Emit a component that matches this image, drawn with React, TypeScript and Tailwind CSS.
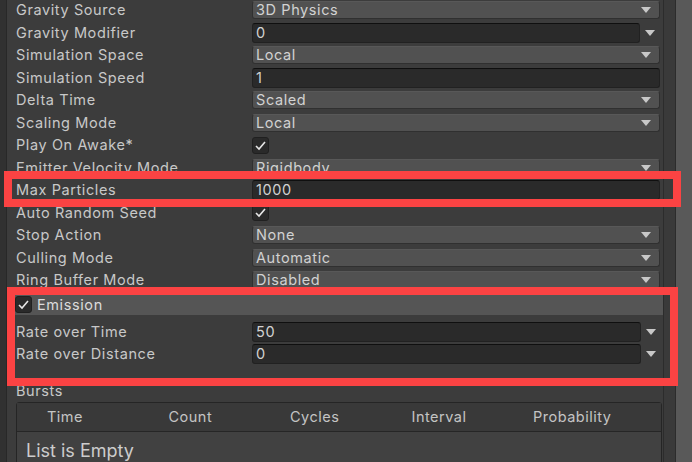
import React from "react";

type Kind = "dropdown" | "field" | "curve" | "check";

interface PropRow {
	label: string;
	kind: Kind;
	value?: string;
}

const mainRows: PropRow[] = [
	{ label: "Gravity Source", kind: "dropdown", value: "3D Physics" },
	{ label: "Gravity Modifier", kind: "curve", value: "0" },
	{ label: "Simulation Space", kind: "dropdown", value: "Local" },
	{ label: "Simulation Speed", kind: "field", value: "1" },
	{ label: "Delta Time", kind: "dropdown", value: "Scaled" },
	{ label: "Scaling Mode", kind: "dropdown", value: "Local" },
	{ label: "Play On Awake*", kind: "check" },
	{ label: "Emitter Velocity Mode", kind: "dropdown", value: "Rigidbody" },
	{ label: "Max Particles", kind: "field", value: "1000" },
	{ label: "Auto Random Seed", kind: "check" },
	{ label: "Stop Action", kind: "dropdown", value: "None" },
	{ label: "Culling Mode", kind: "dropdown", value: "Automatic" },
	{ label: "Ring Buffer Mode", kind: "dropdown", value: "Disabled" },
];

const emissionRows: PropRow[] = [
	{ label: "Rate over Time", kind: "curve", value: "50" },
	{ label: "Rate over Distance", kind: "curve", value: "0" },
];

const burstColumns = ["Time", "Count", "Cycles", "Interval", "Probability"];

function Arrow() {
	return (
		<svg width="10" height="6" viewBox="0 0 10 6" className="shrink-0">
			<polygon points="0,0 10,0 5,6" fill="#c8c8c8" />
		</svg>
	);
}

function CheckBox() {
	return (
		<div className="w-[17px] h-[17px] rounded-[3px] bg-[#2a2a2a] border border-[#202020] flex items-center justify-center">
			<svg width="13" height="13" viewBox="0 0 13 13">
				<polyline
					points="2,7 5,10 11,3"
					fill="none"
					stroke="#e6e6e6"
					strokeWidth={1.6}
				/>
			</svg>
		</div>
	);
}

function Value({ row }: { row: PropRow }) {
	if (row.kind === "check") {
		return <CheckBox />;
	}
	if (row.kind === "dropdown") {
		return (
			<div className="flex-1 h-[18px] rounded-[3px] bg-[#515151] border border-[#303030] border-t-[#585858] flex items-center pl-[3px] pr-[8px]">
				<span className="flex-1 text-[#d2d2d2]">{row.value}</span>
				<Arrow />
			</div>
		);
	}
	const input = (
		<div className="flex-1 h-[20px] rounded-[3px] bg-[#2a2a2a] border border-[#212121] border-t-[#0f0f0f] flex items-center pl-[3px]">
			<span className="text-[#d2d2d2]">{row.value}</span>
		</div>
	);
	if (row.kind === "field") return input;
	return (
		<div className="flex-1 flex items-center">
			{input}
			<div className="w-[20px] flex justify-center">
				<Arrow />
			</div>
		</div>
	);
}

function Row({ row }: { row: PropRow }) {
	return (
		<div className="h-[22.5px] flex items-center pb-[2px] pl-[9px] pr-[3px]">
			<div className="w-[236px] text-[#c8c8c8] whitespace-nowrap overflow-hidden">
				{row.label}
			</div>
			<Value row={row} />
		</div>
	);
}

export default function App() {
	return (
		<div className="relative w-[692px] h-[462px] overflow-hidden flex bg-[#3c3c3c] text-[14.5px] tracking-[0.6px] font-['Inter','Noto_Sans',sans-serif]">
			<div className="w-[7px] bg-[#313131] border-r border-[#282828]" />

			<div className="w-[656px] flex flex-col">
				{mainRows.map((row) => (
					<Row key={row.label} row={row} />
				))}

				<div className="mt-[1.5px] ml-[4px] mr-[-2px] border-r border-[#303030]">
					<div className="h-[21px] bg-[#555555] rounded-t-[3px] flex items-center gap-[5px] pl-[4px]">
						<CheckBox />
						<span className="text-[#dcdcdc]">Emission</span>
					</div>
					<div className="pt-[6.5px] pb-[14px] -ml-[4px]">
						{emissionRows.map((row) => (
							<Row key={row.label} row={row} />
						))}
					</div>
				</div>

				<div className="h-[20px] flex items-center pl-[9px] text-[#c8c8c8]">
					Bursts
				</div>
				<div className="ml-[9px] mr-[1px] mt-[1px] flex-1 border border-[#252525] rounded-t-[3px] bg-[#414141] flex flex-col">
					<div className="h-[29px] shrink-0 bg-[#393939] border-b border-[#262626] flex items-center pl-[30px] text-[#c4c4c4] text-[14.5px] tracking-[0.5px]">
						{burstColumns.map((col) => (
							<div key={col} className="w-[121.5px]">
								{col}
							</div>
						))}
					</div>
					<div className="pl-[9px] pt-[5px] text-[18px] tracking-[0px] text-[#cccccc]">
						List is Empty
					</div>
				</div>
			</div>

			<div className="w-[13px] bg-[#3a3a3a] border-l border-[#2c2c2c] border-r border-[#2b2b2b]" />
			<div className="flex-1 bg-[#595959]" />

			<div className="absolute left-[4px] top-[171px] w-[677px] h-[36px] border-[8px] border-[#fb4343]" />
			<div className="absolute left-[7px] top-[287px] w-[671px] h-[99px] border-[8px] border-[#fb4343]" />
		</div>
	);
}
